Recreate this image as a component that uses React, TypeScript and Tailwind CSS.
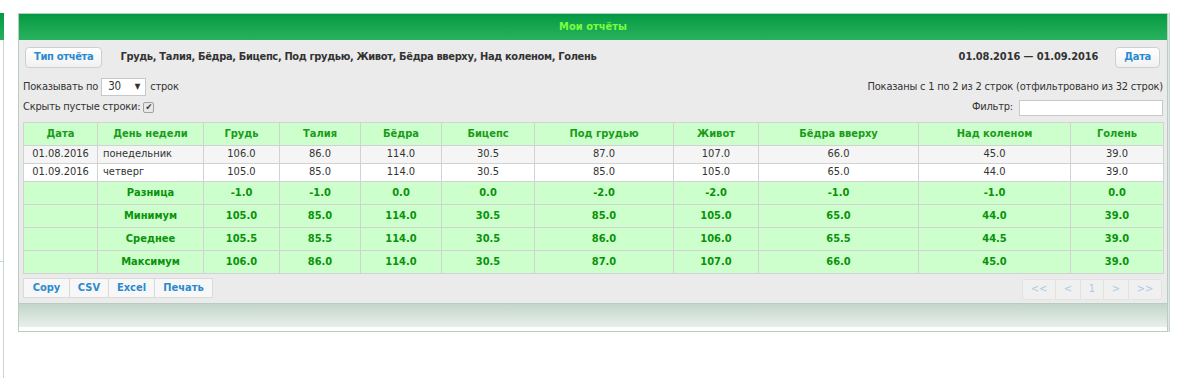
import React from "react";

const cols = [
  { name: "Дата", w: 74 },
  { name: "День недели", w: 106 },
  { name: "Грудь", w: 76 },
  { name: "Талия", w: 81 },
  { name: "Бёдра", w: 81 },
  { name: "Бицепс", w: 93 },
  { name: "Под грудью", w: 139 },
  { name: "Живот", w: 85 },
  { name: "Бёдра вверху", w: 160 },
  { name: "Над коленом", w: 152 },
  { name: "Голень", w: 93 },
];

const rows = [
  ["01.08.2016", "понедельник", "106.0", "86.0", "114.0", "30.5", "87.0", "107.0", "66.0", "45.0", "39.0"],
  ["01.09.2016", "четверг", "105.0", "85.0", "114.0", "30.5", "85.0", "105.0", "65.0", "44.0", "39.0"],
];

const totals = [
  ["Разница", "-1.0", "-1.0", "0.0", "0.0", "-2.0", "-2.0", "-1.0", "-1.0", "0.0"],
  ["Минимум", "105.0", "85.0", "114.0", "30.5", "85.0", "105.0", "65.0", "44.0", "39.0"],
  ["Среднее", "105.5", "85.5", "114.0", "30.5", "86.0", "106.0", "65.5", "44.5", "39.0"],
  ["Максимум", "106.0", "86.0", "114.0", "30.5", "87.0", "107.0", "66.0", "45.0", "39.0"],
];

const font = { fontFamily: '"DejaVu Sans Condensed", "DejaVu Sans", Verdana, sans-serif' };

function Btn({ children }: { children: React.ReactNode }) {
  return (
    <button
      type="button"
      className="h-[21px] rounded-[4px] border border-[#cfcfcf] bg-gradient-to-b from-white to-[#f1f1f1] px-[8px] text-[11px] font-bold tracking-[-0.3px] text-[#2b8ad0]"
    >
      {children}
    </button>
  );
}

export default function App() {
  return (
    <div
      className="flex h-[378px] w-[1178px] overflow-hidden bg-white text-[11px] text-[#333]"
      style={font}
    >
      {/* panel a la izquierda, cortado */}
      <div className="flex w-[4px] flex-col pt-[13px]">
        <div className="h-[27px] bg-gradient-to-b from-[#009a42] to-[#25b05b]" />
        <div className="h-[222px] border-r border-b border-[#c9d6ce]" />
        <div className="flex-1 border-r border-[#c9d6ce]" />
      </div>

      <div className="ml-[14px] mt-[13px] h-[319px] w-[1150px] border border-[#b8cdc0] shadow-[1px_0_0_#dfe8e2,2px_0_0_#c8d6cd]">
        <div className="flex h-[26px] items-center justify-center bg-gradient-to-b from-[#009a42] to-[#28b25e] font-bold text-[#78ff3c]">
          Мои отчёты
        </div>

        <div className="h-[263px] bg-[#ebebeb] px-[4px] pt-[7px]">
          <div className="ml-[2px] mr-[3px] flex h-[21px] items-center">
            <Btn>Тип отчёта</Btn>
            <span className="ml-[18px] font-bold tracking-[-0.35px] text-[#333]">
              Грудь, Талия, Бёдра, Бицепс, Под грудью, Живот, Бёдра вверху, Над коленом, Голень
            </span>
            <span className="ml-auto mr-[17px] font-bold tracking-[-0.1px] text-[#333]">01.08.2016 — 01.09.2016</span>
            <Btn>Дата</Btn>
          </div>

          <div className="mt-[10px] flex h-[18px] items-center justify-between tracking-[-0.2px]">
            <div className="flex items-center">
              <span>Показывать по</span>
              <span className="ml-[3px] flex h-[18px] w-[45px] items-center justify-between border border-[#c8c8c8] bg-white pl-[6px] pr-[5px] text-[11.5px]">
                30<span className="text-[8px]">▼</span>
              </span>
              <span className="ml-[4px]">строк</span>
            </div>
            <span>Показаны с 1 по 2 из 2 строк (отфильтровано из 32 строк)</span>
          </div>

          <div className="mt-[3px] flex h-[17px] items-center justify-between tracking-[-0.2px]">
            <div className="flex items-center">
              <span>Скрыть пустые строки:</span>
              <span className="ml-[3px] flex h-[11px] w-[11px] items-center justify-center rounded-[2px] border border-[#a0a0a0] bg-[#e8e8e8] text-[9px] leading-none text-[#333]">
                ✔
              </span>
            </div>
            <div className="flex items-center">
              <span>Фильтр:</span>
              <span className="ml-[6px] h-[16px] w-[144px] border border-[#c8c8c8] bg-white" />
            </div>
          </div>

          <table className="mt-[6px] w-[1141px] table-fixed border-collapse border border-[#d2d2d2]">
            <colgroup>
              {cols.map((c) => (
                <col key={c.name} style={{ width: c.w }} />
              ))}
            </colgroup>
            <thead>
              <tr className="h-[23px] bg-[#ccffcc]">
                {cols.map((c) => (
                  <th key={c.name} className="border border-[#d2d2d2] p-0 text-center font-bold text-[#1a9b1a]">
                    {c.name}
                  </th>
                ))}
              </tr>
            </thead>
            <tbody>
              {rows.map((r, i) => (
                <tr key={i} className={i === 0 ? "h-[18px] bg-[#f5f5f5]" : "h-[18px] bg-white"}>
                  {r.map((v, j) => (
                    <td
                      key={j}
                      className={
                        j === 1
                          ? "border border-[#d2d2d2] px-[5px] py-0 text-left"
                          : "border border-[#d2d2d2] p-0 text-center"
                      }
                    >
                      {v}
                    </td>
                  ))}
                </tr>
              ))}
              {totals.map((r) => (
                <tr key={r[0]} className="h-[23px] bg-[#ccffcc] font-bold text-[#0a920a]">
                  <td className="border border-[#d2d2d2] p-0" />
                  {r.map((v, j) => (
                    <td key={j} className="border border-[#d2d2d2] p-0 text-center">
                      {v}
                    </td>
                  ))}
                </tr>
              ))}
            </tbody>
          </table>

          <div className="mt-[4px] flex items-start justify-between">
            <div className="flex h-[20px] border border-[#dadada] bg-[#f7f7f7] font-bold text-[#2b8ad0]">
              {[
                ["Copy", "w-[45px]"],
                ["CSV", "w-[39px]"],
                ["Excel", "w-[46px]"],
                ["Печать", "w-[58px]"],
              ].map(([t, w], i) => (
                <span
                  key={t}
                  className={`flex items-center justify-center ${w} ${i > 0 ? "border-l border-[#dadada]" : ""}`}
                >
                  {t}
                </span>
              ))}
            </div>
            <div className="mr-[1px] mt-[1px] flex h-[21px] rounded-[3px] border border-[#e2e2e2] bg-[#f0f0f0] text-[#aacbe6]">
              {[
                ["<<", "w-[32px]"],
                ["<", "w-[25px]"],
                ["1", "w-[23px]"],
                [">", "w-[25px]"],
                [">>", "w-[33px]"],
              ].map(([t, w], i) => (
                <span
                  key={i}
                  className={`flex items-center justify-center ${w} ${i > 0 ? "border-l border-[#e2e2e2]" : ""}`}
                >
                  {t}
                </span>
              ))}
            </div>
          </div>
        </div>

        <div className="h-[24px] border-t border-[#b9ccc0] bg-gradient-to-b from-[#c3d6cb] to-[#e9efeb]" />
      </div>
    </div>
  );
}
